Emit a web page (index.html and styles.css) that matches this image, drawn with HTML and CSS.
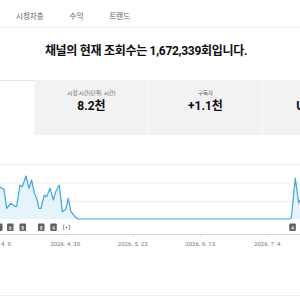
FILE: index.html
```html
<!DOCTYPE html>
<html lang="ko">
<head>
  <meta charset="UTF-8">
  <meta name="viewport" content="width=device-width, initial-scale=1.0">
  <title>채널 분석</title>
  <link rel="stylesheet" href="styles.css">
</head>
<body>
  <nav class="tabs">
    <span class="tab">시청자층</span>
    <span class="tab">수익</span>
    <span class="tab">트렌드</span>
  </nav>

  <h1 class="headline">채널의 현재 조회수는 1,672,339회입니다.</h1>

  <div class="cards-viewport">
    <div class="cards">
      <div class="card selected"></div>
      <div class="card">
        <div class="card-label">시청 시간(단위: 시간)</div>
        <div class="card-value">8.2천</div>
      </div>
      <div class="card">
        <div class="card-label">구독자</div>
        <div class="card-value">+1.1천</div>
      </div>
      <div class="card">
        <div class="card-label"></div>
        <div class="card-value">US$5.23</div>
      </div>
    </div>
  </div>

  <svg class="chart" width="300" height="115" viewBox="0 0 300 115">
    <!-- grid -->
    <g class="grid">
      <line x1="0" y1="29.5" x2="300" y2="29.5"/>
      <line x1="0" y1="48" x2="300" y2="48"/>
      <line x1="0" y1="66.5" x2="300" y2="66.5"/>
    </g>

    <polygon class="area" points="0,52.3 4,54.3 6.7,73.3 10.7,68.3 15.7,71.7 16.7,71 20,50 22.3,51.7 26,41 29,53.3 31.7,45 34.3,58.3 36.7,63.3 39,73.3 41,73.3 44.3,60 46.7,61.7 50,53.3 53.3,65 55.7,56.7 59.3,50 62.3,76.7 65.7,74.3 68.3,63.3 71,76.7 75,81.7 77.7,84 289.3,84 291.3,83 295.3,43 298.7,68 300,65 300,84 0,84"/>
    <polyline class="line" points="0,52.3 4,54.3 6.7,73.3 10.7,68.3 15.7,71.7 16.7,71 20,50 22.3,51.7 26,41 29,53.3 31.7,45 34.3,58.3 36.7,63.3 39,73.3 41,73.3 44.3,60 46.7,61.7 50,53.3 53.3,65 55.7,56.7 59.3,50 62.3,76.7 65.7,74.3 68.3,63.3 71,76.7 75,81.7 77.7,84 289.3,84 291.3,83 295.3,43 298.7,68 300,65"/>

    <!-- video markers -->
    <g class="marker">
      <rect x="-4" y="88.5" width="6.5" height="7.5" rx="1"/>
      <rect x="7" y="88.5" width="6.5" height="7.5" rx="1"/><text x="10.25" y="94.5">6</text>
      <rect x="19.5" y="88.5" width="6.5" height="7.5" rx="1"/><text x="22.75" y="94.5">8</text>
      <rect x="38" y="88.5" width="6.5" height="7.5" rx="1"/><text x="41.25" y="94.5">8</text>
      <rect x="50.3" y="88.5" width="6.5" height="7.5" rx="1"/><text x="53.55" y="94.5">4</text>
      <rect x="289.3" y="88.5" width="6.5" height="7.5" rx="1"/><text x="292.55" y="94.5">4</text>
    </g>
    <g class="live">
      <circle cx="66.5" cy="92.3" r="0.9"/>
      <path d="M64 89.6 Q62.3 92.3 64 95"/>
      <path d="M69 89.6 Q70.7 92.3 69 95"/>
    </g>

    <!-- x axis -->
    <line class="axis" x1="0" y1="99.5" x2="300" y2="99.5"/>
    <g class="ticks">
      <line x1="66" y1="99.5" x2="66" y2="101.5"/>
      <line x1="133.5" y1="99.5" x2="133.5" y2="101.5"/>
      <line x1="201" y1="99.5" x2="201" y2="101.5"/>
      <line x1="268" y1="99.5" x2="268" y2="101.5"/>
    </g>
    <g class="labels">
      <text x="-1.5" y="111">2026. 4. 9.</text>
      <text x="66" y="111">2026. 4. 30.</text>
      <text x="133.5" y="111">2026. 5. 22.</text>
      <text x="201" y="111">2026. 6. 13.</text>
      <text x="268" y="111">2026. 7. 4.</text>
    </g>
  </svg>

  <div class="footer-rule"></div>
</body>
</html>
```

FILE: styles.css
```css
body {
  margin: 0;
  background: #fff;
  font-family: Roboto, "Noto Sans CJK KR", sans-serif;
  color: #0d0d0d;
  overflow: hidden;
}

.tabs {
  display: flex;
  align-items: center;
  gap: 26px;
  height: 27px;
  padding-left: 16px;
  border-bottom: 1px solid #efefef;
}

.tab {
  font-size: 7.5px;
  color: #606060;
  padding-top: 3px;
}

.headline {
  margin: 15px 8px 0 0;
  font-size: 12px;
  letter-spacing: -0.3px;
  line-height: 16px;
  font-weight: 700;
  text-align: center;
}

.cards-viewport {
  margin-top: 21px;
  overflow: hidden;
}

.cards {
  display: flex;
  gap: 1px;
  margin-left: -79px;
  background: #fafafa;
}

.card {
  flex: 0 0 113px;
  height: 55px;
  box-sizing: border-box;
  padding-top: 9px;
  background: #f2f2f2;
  text-align: center;
  white-space: nowrap;
}

.card.selected {
  background: #fff;
  border-top: 1px solid #e5e5e5;
}

.card-label {
  height: 8px;
  font-size: 5.5px;
  line-height: 8px;
  color: #606060;
}

.card-value {
  margin-top: 2px;
  font-size: 12px;
  line-height: 14px;
  font-weight: 700;
}

.chart {
  display: block;
}

.grid line { stroke: #ececec; stroke-width: 1; }
.area { fill: #e5f3fa; }
.line { fill: none; stroke: #3ea6d8; stroke-width: 1.2; stroke-linejoin: round; }

.marker rect { fill: #5f5f5f; }
.marker text { fill: #e8e8e8; font-size: 5px; text-anchor: middle; font-weight: 700; }

.live circle { fill: #707070; }
.live path { fill: none; stroke: #707070; stroke-width: 0.8; }

.axis { stroke: #d6d6d6; stroke-width: 1; }
.ticks line { stroke: #d6d6d6; stroke-width: 1; }
.labels text { fill: #777; font-size: 6px; text-anchor: middle; }

.footer-rule {
  margin-top: 45px;
  border-top: 1px solid #efefef;
}
```
